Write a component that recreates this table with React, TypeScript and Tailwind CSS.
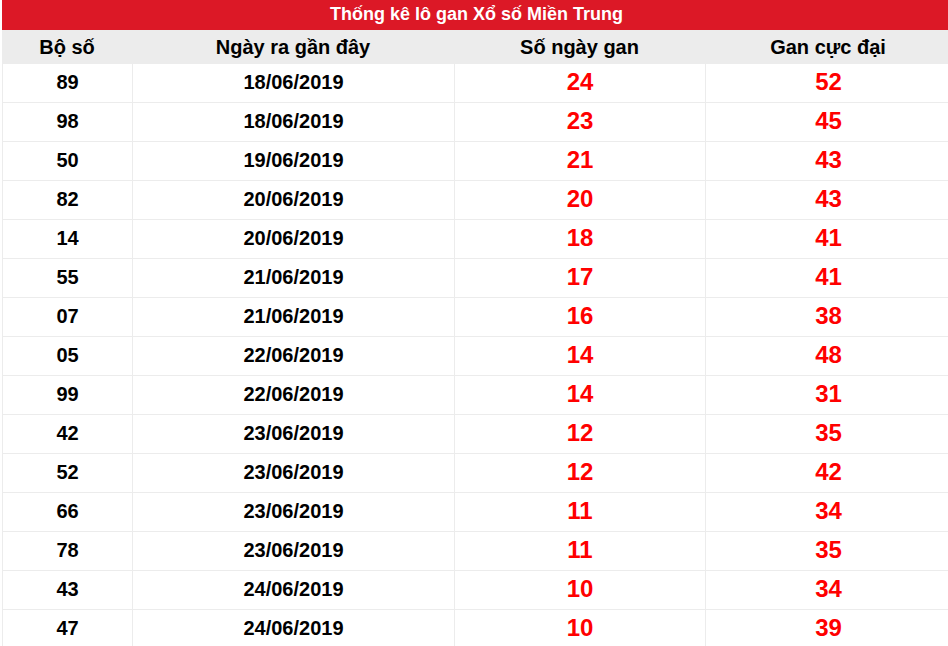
const rows: [string, string, number, number][] = [
  ["89", "18/06/2019", 24, 52],
  ["98", "18/06/2019", 23, 45],
  ["50", "19/06/2019", 21, 43],
  ["82", "20/06/2019", 20, 43],
  ["14", "20/06/2019", 18, 41],
  ["55", "21/06/2019", 17, 41],
  ["07", "21/06/2019", 16, 38],
  ["05", "22/06/2019", 14, 48],
  ["99", "22/06/2019", 14, 31],
  ["42", "23/06/2019", 12, 35],
  ["52", "23/06/2019", 12, 42],
  ["66", "23/06/2019", 11, 34],
  ["78", "23/06/2019", 11, 35],
  ["43", "24/06/2019", 10, 34],
  ["47", "24/06/2019", 10, 39],
];

const cols = "grid grid-cols-[130px_322px_251px_246px]";

export default function App() {
  return (
    <div className="h-[646px] w-[948px] overflow-hidden bg-white font-['Liberation_Sans',Arial,sans-serif] font-bold">
      <div className="ml-[2px] w-[949px]">
        {/* Title */}
        <div className="flex h-[30px] items-center justify-center bg-[#dc1826] pb-[2px] text-[18px] text-white">
          Thống kê lô gan Xổ số Miền Trung
        </div>

        {/* Header */}
        <div className={`${cols} h-[34px] bg-[#ececec] text-[20px] text-black`}>
          {["Bộ số", "Ngày ra gần đây", "Số ngày gan", "Gan cực đại"].map((h) => (
            <div key={h} className="flex items-center justify-center">
              {h}
            </div>
          ))}
        </div>

        {/* Rows */}
        {rows.map(([num, date, days, max], i) => (
          <div key={i} className={`${cols} h-[39px] border-b border-[#ececec]`}>
            <div className="flex items-center justify-center border-l border-[#ececec] pb-[2px] text-[20px] text-black">
              {num}
            </div>
            <div className="flex items-center justify-center border-l border-[#ececec] pb-[2px] text-[20px] text-black">
              {date}
            </div>
            <div className="flex items-center justify-center border-l border-[#ececec] pb-[2px] text-[24px] text-[#ff0000]">
              {days}
            </div>
            <div className="flex items-center justify-center border-l border-[#ececec] pb-[2px] text-[24px] text-[#ff0000]">
              {max}
            </div>
          </div>
        ))}
      </div>
    </div>
  );
}
